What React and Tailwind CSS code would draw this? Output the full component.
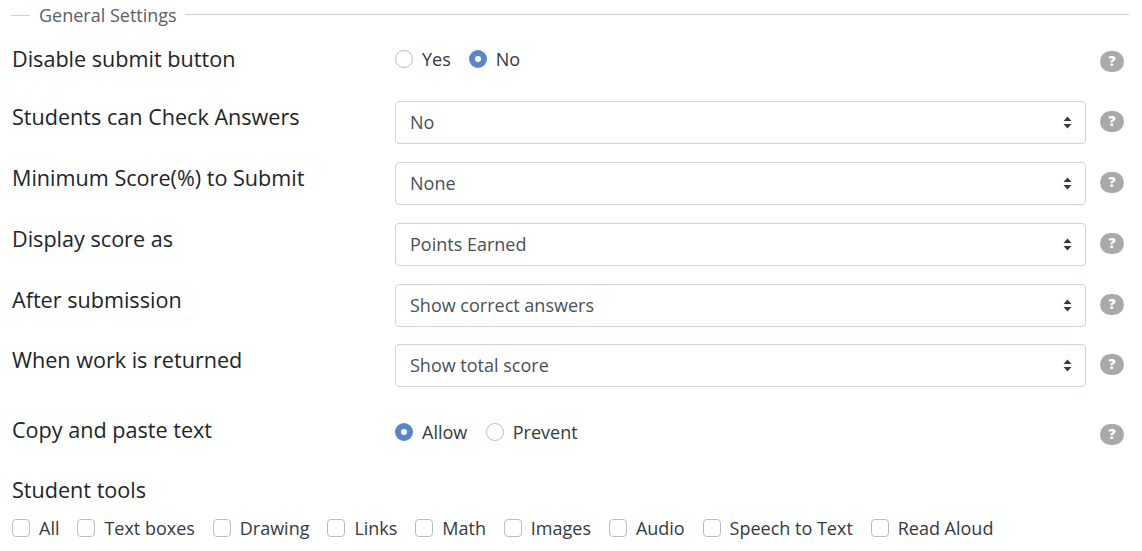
import React from 'react';

const selects = [
  { label: 'Students can Check Answers', value: 'No', rowClass: 'h-[43px] mb-[18px]' },
  { label: 'Minimum Score(%) to Submit', value: 'None', rowClass: 'h-[43px] mb-[18px]' },
  { label: 'Display score as', value: 'Points Earned', rowClass: 'h-[43px] mb-[18px]' },
  { label: 'After submission', value: 'Show correct answers', rowClass: 'h-[43px] mb-[17px]' },
  { label: 'When work is returned', value: 'Show total score', rowClass: 'h-[43px]' },
];

const tools = ['All', 'Text boxes', 'Drawing', 'Links', 'Math', 'Images', 'Audio', 'Speech to Text', 'Read Aloud'];

const HelpIcon = ({ className }) => (
  <div className={`ml-[14px] w-6 h-[21px] shrink-0 rounded-full bg-[#a9a9a9] flex items-center justify-center text-white text-[14px] font-extrabold leading-none ${className || ''}`}>
    ?
  </div>
);

const Radio = ({ label, checked, className }) => (
  <label className={`flex items-center ${className || ''}`}>
    {checked ? (
      <span className="w-[18px] h-[18px] rounded-full bg-[#5a86c8] flex items-center justify-center">
        <span className="w-1.5 h-1.5 rounded-full bg-white"></span>
      </span>
    ) : (
      <span className="w-[18px] h-[18px] rounded-full border border-[#b8bfc6] bg-white"></span>
    )}
    <span className="ml-[9px] text-[18px] text-[#343a40]">{label}</span>
  </label>
);

const SelectBox = ({ value }) => (
  <div className="w-[691px] h-[43px] flex items-center justify-between pl-[14px] pr-[13px] border border-[#ced4da] rounded bg-white text-[18px] text-[#495057]">
    <span>{value}</span>
    <svg width="9" height="13" viewBox="0 0 9 13">
      <path d="M4.5 0.5 L8.5 5 L0.5 5 Z M4.5 12.5 L8.5 8 L0.5 8 Z" fill="#343a40" />
    </svg>
  </div>
);

const Label = ({ children, className }) => (
  <div className={`w-[383px] shrink-0 text-[21.6px] text-[#212529] leading-[30px] ${className || ''}`}>{children}</div>
);

export default function App() {
  return (
    <div className="w-[1142px] h-[551px] overflow-hidden bg-white pl-3 pr-[13px] font-['Open_Sans',sans-serif]">
      <div className="flex items-center h-[30px] -ml-px">
        <div className="w-[19px] h-px bg-[#cfcfcf] mt-px"></div>
        <div className="ml-[9px] mr-2 text-[18px] text-[#5a6068]">General Settings</div>
        <div className="flex-1 h-px bg-[#cfcfcf] -mt-px"></div>
      </div>

      <div className="flex items-center h-[30px] mt-[14px] mb-[27px]">
        <Label>Disable submit button</Label>
        <div className="w-[691px] flex items-center">
          <Radio label="Yes" className="mr-[18px]" />
          <Radio label="No" checked />
        </div>
        <HelpIcon className="mt-1" />
      </div>

      {selects.map((row) => (
        <div key={row.label} className={`flex ${row.rowClass}`}>
          <Label className="mt-px">{row.label}</Label>
          <SelectBox value={row.value} />
          <div className="flex items-center h-[40px]">
            <HelpIcon />
          </div>
        </div>
      ))}

      <div className="flex items-center h-[30px] mt-[30px]">
        <Label className="-mt-1">Copy and paste text</Label>
        <div className="w-[691px] flex items-center">
          <Radio label="Allow" checked className="mr-[18.5px]" />
          <Radio label="Prevent" />
        </div>
        <HelpIcon className="mt-1" />
      </div>

      <div className="mt-[28px] text-[21.6px] text-[#212529] leading-[30px]">Student tools</div>

      <div className="flex items-center mt-[11px] h-6 gap-[17.9px]">
        {tools.map((name) => (
          <label key={name} className="flex items-center">
            <span className="w-[18px] h-[18px] rounded-[4px] border border-[#b8bfc6] bg-white"></span>
            <span className="ml-[9px] text-[18px] text-[#343a40]">{name}</span>
          </label>
        ))}
      </div>
    </div>
  );
}
